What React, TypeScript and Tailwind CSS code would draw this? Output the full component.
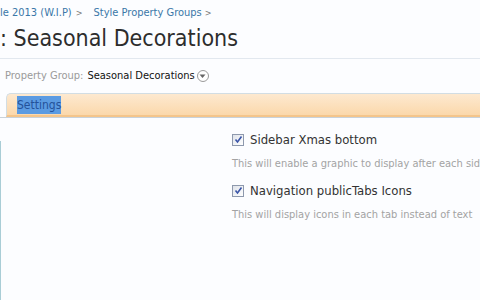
import React from 'react';

const Check: React.FC = () => (
    <span className="flex h-[12px] w-[12px] shrink-0 items-center justify-center border border-[#8e99ad] bg-gradient-to-br from-[#dfe3ea] to-[#ffffff]">
        <svg width="9" height="9" viewBox="0 0 9 9">
            <path d="M1.5 4.5 L3.5 7 L7.5 1.5" fill="none" stroke="#3a55a8" strokeWidth="1.6" />
        </svg>
    </span>
);

const options = [
    { label: 'Sidebar Xmas bottom', hint: 'This will enable a graphic to display after each sidebar block' },
    { label: 'Navigation publicTabs Icons', hint: 'This will display icons in each tab instead of text' },
];

export default function App() {
    return (
        <div className="h-[300px] w-[480px] overflow-hidden bg-[#fcfdff] font-['DejaVu_Sans_Condensed','DejaVu_Sans',sans-serif]">
            {/* breadcrumb + title */}
            <div className="border-b border-[#e2e8ef] pb-[5px]">
                <div className="flex h-[26px] items-center pt-[1px] text-[11px] text-[#3a77a8]">
                    <span>le 2013 (W.I.P)</span>
                    <span className="ml-[4px] text-[9px] text-[#777]">&gt;</span>
                    <span className="ml-[11px]">Style Property Groups</span>
                    <span className="ml-[3px] text-[9px] text-[#777]">&gt;</span>
                </div>
                <h1 className="h-[27px] text-[23px] leading-[25px] text-[#2d2d2d]">: Seasonal Decorations</h1>
            </div>

            <div className="flex h-[34px] items-center pl-[5px] text-[11px]">
                <span className="text-[#9a9a9a]">Property Group:</span>
                <span className="ml-[4px] text-[#111]">Seasonal Decorations</span>
                <span className="ml-[2px] flex h-[12px] w-[12px] items-center justify-center rounded-full border border-[#9a9a9a] bg-white">
                    <svg width="7" height="5" viewBox="0 0 7 5">
                        <path d="M0.5 0.5 L3.5 4 L6.5 0.5 Z" fill="#666" />
                    </svg>
                </span>
            </div>

            {/* tab bar */}
            <div className="flex border-b border-[#c9d2da]">
                <div className="w-[6px]" />
                <div className="flex h-[24px] flex-1 items-center rounded-tl-[5px] border-t border-l border-[#d2dde3] border-b-2 border-b-[#f4c58b] bg-gradient-to-b from-[#fde9d0] to-[#fbd8ab] pl-[10px] text-[12px]">
                    <span className="bg-[#5b9be2] text-[#24529a]">Settings</span>
                </div>
            </div>

            <div className="flex">
                <div className="mt-[23px] h-[160px] w-[6px] border-t border-r border-[#a9cdd6]" />
                <div className="ml-[231px] flex flex-col pt-[12px]">
                    {options.map((o, i) => (
                        <div key={i} className="mb-[9px]">
                            <div className="flex items-center gap-[6px]">
                                <Check />
                                <span className="whitespace-nowrap text-[13px] text-[#333]">{o.label}</span>
                            </div>
                            <div className="mt-[6px] whitespace-nowrap text-[11px] text-[#a3a3a3]">{o.hint}</div>
                        </div>
                    ))}
                </div>
            </div>
        </div>
    );
}
